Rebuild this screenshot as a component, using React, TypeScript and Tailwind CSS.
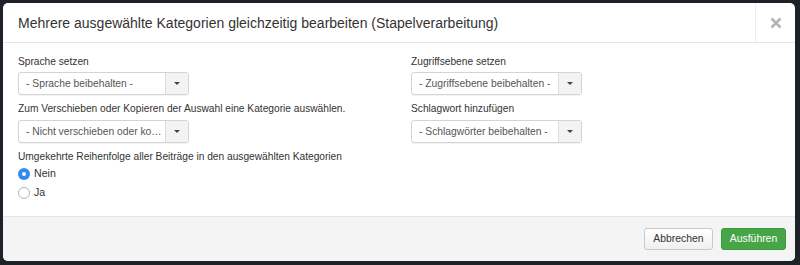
import { type FC } from "react";

const Select: FC<{ value: string }> = ({ value }) => (
  <div className="flex h-[23px] w-[171px] items-stretch overflow-hidden rounded-[3px] border border-[#d4d4d4] bg-white shadow-[0_1px_1px_rgba(0,0,0,0.05)]">
    <div className="flex min-w-0 flex-1 items-center pl-[7px] pr-[2px]">
      <span className="block truncate text-[10.3px] text-[#555]">{value}</span>
    </div>
    <div className="flex w-[23px] shrink-0 items-center justify-center border-l border-[#ddd] bg-[#f3f3f3]">
      <span className="block h-0 w-0 border-x-[3px] border-t-[3px] border-x-transparent border-t-[#444]" />
    </div>
  </div>
);

const Radio: FC<{ label: string; checked?: boolean }> = ({ label, checked }) => (
  <label className="flex h-[18.5px] items-center gap-[4px] text-[10.6px] text-[#333]">
    {checked ? (
      <span className="flex h-[12px] w-[12px] items-center justify-center rounded-full bg-[#2f8bf0]">
        <span className="h-[4px] w-[4px] rounded-full bg-white" />
      </span>
    ) : (
      <span className="h-[12px] w-[12px] rounded-full border border-[#b5b5b5] bg-white" />
    )}
    {label}
  </label>
);

const Label: FC<{ text: string; className?: string }> = ({ text, className = "" }) => (
  <div className={`h-[16px] text-[10.2px] leading-[16px] text-[#333] ${className}`}>{text}</div>
);

export default function App() {
  return (
    <div
      className="h-[265px] w-[800px] bg-[#1d2228] p-[3px] pr-[5px] pb-[4px]"
      style={{ fontFamily: '"Liberation Sans", Arial, sans-serif' }}
    >
      <div className="flex h-full flex-col overflow-hidden rounded-[5px] bg-white">
        <div className="flex h-[40px] items-stretch border-b border-[#e5e5e5]">
          <h3 className="flex flex-1 items-center pl-[15px] pt-[1px] text-[14px] text-[#333]">
            Mehrere ausgewählte Kategorien gleichzeitig bearbeiten (Stapelverarbeitung)
          </h3>
          <button className="flex w-[40px] items-center justify-center border-l border-[#eee] text-[#b3b3b3]">
            <svg width="12" height="12" viewBox="0 0 12 12">
              <path d="M1.5 1.5 L10.5 10.5 M10.5 1.5 L1.5 10.5" stroke="currentColor" strokeWidth="2.6" />
            </svg>
          </button>
        </div>

        <div className="flex-1 px-[15px] pt-[11px]">
          <div className="grid grid-cols-2 gap-x-6">
            <div>
              <Label text="Sprache setzen" className="mb-[2px]" />
              <Select value="- Sprache beibehalten -" />
              <Label
                text="Zum Verschieben oder Kopieren der Auswahl eine Kategorie auswählen."
                className="mb-[3px] mt-[6px]"
              />
              <Select value="- Nicht verschieben oder kopieren -" />
            </div>
            <div>
              <Label text="Zugriffsebene setzen" className="mb-[2px]" />
              <Select value="- Zugriffsebene beibehalten -" />
              <Label text="Schlagwort hinzufügen" className="mb-[3px] mt-[6px]" />
              <Select value="- Schlagwörter beibehalten -" />
            </div>
          </div>
          <Label
            text="Umgekehrte Reihenfolge aller Beiträge in den ausgewählten Kategorien"
            className="mt-[6px]"
          />
          <Radio label="Nein" checked />
          <Radio label="Ja" />
        </div>

        <div className="flex h-[45px] items-center justify-end gap-[8px] border-t border-[#e5e5e5] bg-[#f4f4f4] pr-[9px]">
          <button className="h-[22px] w-[69px] rounded-[3px] border border-[#c8c8c8] bg-gradient-to-b from-white to-[#f0f0f0] text-[10.4px] text-[#333]">
            Abbrechen
          </button>
          <button className="h-[22px] w-[65px] rounded-[3px] border border-[#3d9a3d] bg-[#46a546] text-[10.4px] text-white">
            Ausführen
          </button>
        </div>
      </div>
    </div>
  );
}
